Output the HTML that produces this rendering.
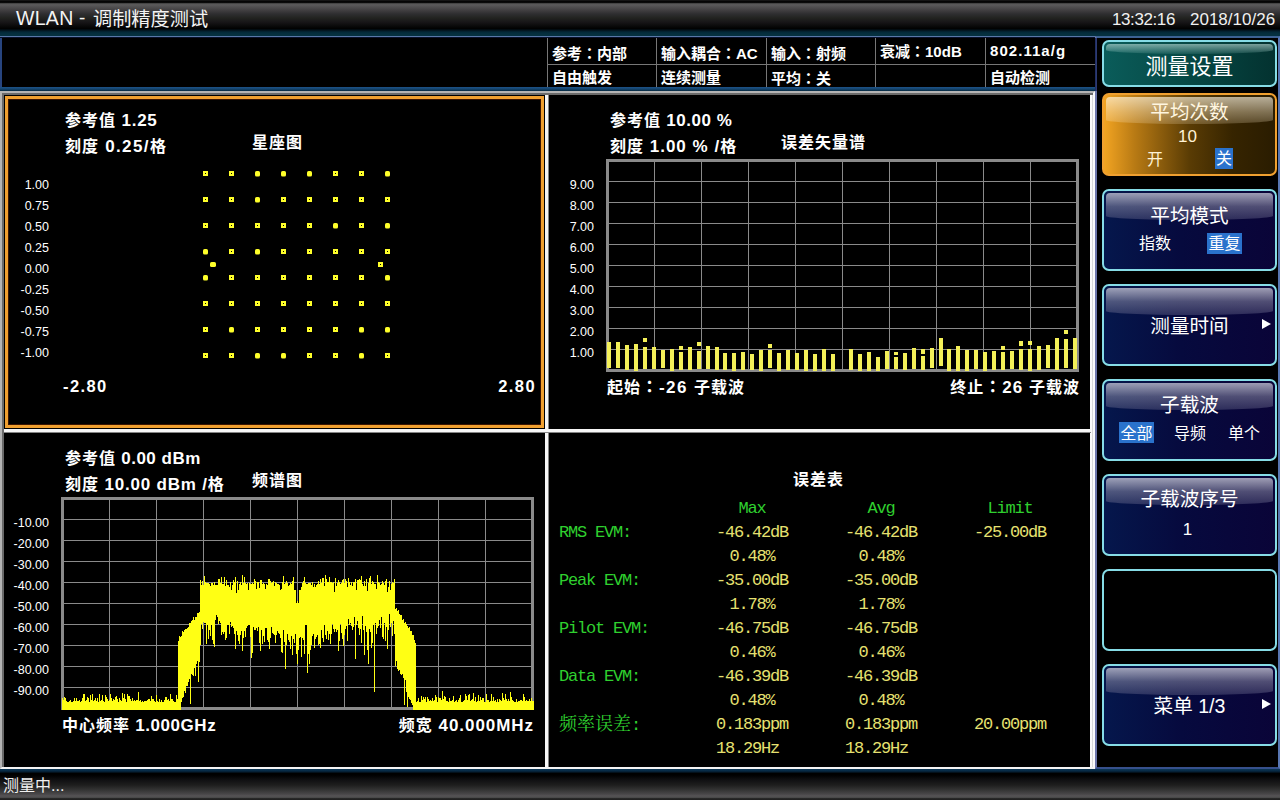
<!DOCTYPE html>
<html lang="zh"><head><meta charset="utf-8"><title>WLAN</title><style>
*{margin:0;padding:0;box-sizing:border-box}
html,body{width:1280px;height:800px;overflow:hidden;background:#000}
body{position:relative;font-family:"Liberation Sans","Noto Sans CJK SC",sans-serif;color:#fff}
.a{position:absolute;white-space:nowrap}
#title{left:0;top:0;width:1280px;height:38px;background:linear-gradient(#181818 0,#121212 1px,#050505 1.4px,#050505 2.4px,#565656 3.8px,#5a595a 5px,#424042 10px,#2e2e30 14px,#222320 18px,#181618 22px,#0a0a0a 26px,#020202 28.5px,#021018 30px,#032838 32px,#05303f 34px,#05303f 35.6px,#5a7aaa 36px,#5676a6 37px,#0a1430 37.4px,#000010 38px)}
#title .t{font-size:19px;line-height:30px;color:#f4f4f4;font-weight:400}
#title .c{top:6px;font-size:17px;line-height:28px;color:#f0f0f0}
#info{left:0;top:38px;width:1095px;height:49px;background:#000;border-left:2px solid #27447f}
#info .v{top:0;width:1px;height:49px;background:#777}
#info .h{left:545px;top:26px;width:548px;height:1px;background:#777}
#info .x{font-size:15px;font-weight:bold;line-height:20px;color:#fff}
#bl{left:0;top:87px;width:1097px;height:4px;background:linear-gradient(#1d5288,#14456f 50%,#072a40)}
#frame{left:0;top:91px;width:1095px;height:678px;background:#000;border:2px solid #b4b4b4;border-right:2px solid #fafafa;border-bottom-color:#f4f4f4;box-shadow:inset 2px 2px 0 #6a6a6a, inset -1px 0 0 #d8d8d8, inset -3px 0 0 #fafafa}
#vdiv{left:545px;top:95px;width:4px;height:672px;background:linear-gradient(90deg,#f6f6f6 0,#f6f6f6 2.6px,#9c9c9c 3px,#6c6c6c 4px)}
#hdiv{left:4px;top:429px;width:1087px;height:4px;background:linear-gradient(#f6f6f6 0,#f6f6f6 2.6px,#9c9c9c 3px,#6c6c6c 4px)}
#sel{left:5px;top:96px;width:539px;height:332px;border:3px solid #f0a030;box-shadow:inset 0 0 0 1px #3a1400}
#side{left:1095px;top:36px;width:185px;height:733px;background:#000;border:2px solid #5876b2;border-bottom:2px solid #36508c;border-top-color:#3c6294;border-left-color:#6c76aa}
.btn{left:1102px;width:175px;border:2px solid #86dce6;border-radius:7px;overflow:hidden}
.btn .g{left:2px;top:2px;right:2px;height:27px;border-radius:4px 4px 50% 50%/4px 4px 4px 4px}
.navy{background:linear-gradient(90deg,#05174c,#060a3e 45%,#0a0438)}
.navy .g{background:linear-gradient(rgba(200,200,215,.78),rgba(150,150,175,.5) 50%,rgba(110,110,145,.36))}
.teal{background:linear-gradient(90deg,#0a5c5a,#064844 50%,#033230)}
.teal .g{height:10px;background:linear-gradient(rgba(200,230,225,.6),rgba(120,180,175,.15))}
.org{background:linear-gradient(90deg,#f2a422,#b87a14 18%,#5a3c04 50%,#362400 75%,#2a1c00);border-color:#f0a030}
.org .g{background:linear-gradient(rgba(255,248,230,.66),rgba(255,240,210,.40) 55%,rgba(255,235,200,.20))}
.bt{left:0;right:0;text-align:center;font-size:19.6px;line-height:26px;color:#fff}
.bs{font-size:16px;line-height:21px;color:#fff;text-align:center}
.hl{background:#2a72cc}
.arr{width:0;height:0;border-left:9px solid #fff;border-top:5px solid transparent;border-bottom:5px solid transparent}
#status{left:0;top:769px;width:1280px;height:31px;background:linear-gradient(#0c3654 0,#0a3250 1px,#062238 2.5px,#000 4.5px,#000 6px,#101012 11px,#1e1e1e 16px,#343434 21px,#484648 25px,#565456 27px,#4a4a4a 28.5px,#242424 29.6px,#202020 31px)}
#status .t{left:3px;top:7px;font-size:16px;line-height:20px;color:#f0f0f0}
.cb{font-weight:700;font-size:16px;letter-spacing:1px;line-height:20px;color:#fff}
.cb span,.lb{font-weight:bold;font-size:17px}
.yl{font-size:12.5px;line-height:14px;color:#fff;text-align:right;width:60px}
.tb{font-family:"Liberation Mono","Noto Serif CJK SC",monospace;font-size:17px;letter-spacing:-1.2px;line-height:20px}
.co{font-family:"Noto Sans CJK JP","Noto Sans CJK TC",sans-serif}
.gr{color:#2fd02f}.ye{color:#e6e070}
</style></head><body>
<div id="title" class="a"><div class="a t" style="left:16px;top:3px;font-size:19.5px;letter-spacing:.3px">WLAN</div><div class="a t" style="left:79px;top:3px">-</div><div class="a t" style="left:93px;top:5px;font-size:19.2px">调制精度测试</div><div class="a c" style="left:1112px;letter-spacing:-.4px">13:32:16</div><div class="a c" style="left:1190px">2018/10/26</div></div>
<div id="info" class="a">
<div class="a v" style="left:545px"></div>
<div class="a v" style="left:654px"></div>
<div class="a v" style="left:764px"></div>
<div class="a v" style="left:873px"></div>
<div class="a v" style="left:983px"></div>
<div class="a h"></div>
<div class="a x" style="left:550px;top:5px">参考<span class="co" lang="ja">：</span>内部</div>
<div class="a x" style="left:550px;top:30px">自由触发</div>
<div class="a x" style="left:659px;top:5px">输入耦合<span class="co" lang="ja">：</span>AC</div>
<div class="a x" style="left:659px;top:30px">连续测量</div>
<div class="a x" style="left:769px;top:5px">输入<span class="co" lang="ja">：</span>射频</div>
<div class="a x" style="left:769px;top:30px">平均<span class="co" lang="ja">：</span>关</div>
<div class="a x" style="left:878px;top:3px">衰减<span class="co" lang="ja">：</span>10dB</div>
<div class="a x" style="left:988px;top:3px;letter-spacing:1.05px">802.11a/g</div>
<div class="a x" style="left:988px;top:30px">自动检测</div>
</div>
<div id="bl" class="a"></div>
<div id="frame" class="a"></div>
<div id="vdiv" class="a"></div><div id="hdiv" class="a"></div>
<div id="sel" class="a"></div>
<div id="side" class="a"></div><div class="a" style="left:1095px;top:38px;width:2px;height:53px;background:linear-gradient(90deg,#1c2a5c,#33407c)"></div>
<div class="a btn teal" style="top:40px;height:47px"><div class="a g"></div><div class="a bt" style="top:12px;font-size:22px">测量设置</div></div>
<div class="a btn org" style="top:93px;height:83px"><div class="a g"></div><div class="a bt" style="top:4px;color:#fff6e0">平均次数</div><div class="a bs" style="left:0;right:4px;top:31px;font-size:17px;color:#fff3d6">10</div><div class="a bs" style="left:43px;top:54px;color:#fff3d6">开</div><div class="a bs hl" style="left:111px;top:53px;width:18px;height:21px">关</div></div>
<div class="a btn navy" style="top:189px;height:82px"><div class="a g"></div><div class="a bt" style="top:12px">平均模式</div><div class="a bs" style="left:35px;top:42px">指数</div><div class="a bs hl" style="left:103px;top:42px;width:35px;height:21px">重复</div></div>
<div class="a btn navy" style="top:284px;height:82px"><div class="a g"></div><div class="a bt" style="top:27px">测量时间</div><div class="a arr" style="left:158px;top:33px"></div></div>
<div class="a btn navy" style="top:379px;height:82px"><div class="a g"></div><div class="a bt" style="top:11px">子载波</div><div class="a bs hl" style="left:15px;top:41px;width:35px;height:21px;line-height:23px">全部</div><div class="a bs" style="left:70px;top:42px">导频</div><div class="a bs" style="left:124px;top:42px">单个</div></div>
<div class="a btn navy" style="top:474px;height:82px"><div class="a g"></div><div class="a bt" style="top:10px">子载波序号</div><div class="a bs" style="left:0;right:4px;top:43px;font-size:17px">1</div></div>
<div class="a btn" style="top:569px;height:82px;background:#000"></div>
<div class="a btn navy" style="top:664px;height:82px"><div class="a g"></div><div class="a bt" style="top:27px">菜单 1/3</div><div class="a arr" style="left:158px;top:33px"></div></div>
<div id="status" class="a"><div class="a t">测量中...</div></div>
<div class="a cb" style="left:65px;top:111px">参考值<span style="letter-spacing:0.75px"> 1.25</span></div>
<div class="a cb" style="left:65px;top:137px">刻度<span style="letter-spacing:1.4px"> 0.25/</span>格</div>
<div class="a cb" style="left:252px;top:133px">星座图</div>
<div class="a yl" style="left:-11px;top:178px">1.00</div>
<div class="a yl" style="left:-11px;top:199px">0.75</div>
<div class="a yl" style="left:-11px;top:220px">0.50</div>
<div class="a yl" style="left:-11px;top:241px">0.25</div>
<div class="a yl" style="left:-11px;top:262px">0.00</div>
<div class="a yl" style="left:-11px;top:283px">-0.25</div>
<div class="a yl" style="left:-11px;top:304px">-0.50</div>
<div class="a yl" style="left:-11px;top:325px">-0.75</div>
<div class="a yl" style="left:-11px;top:346px">-1.00</div>
<div class="a cb lb" style="left:63px;top:376px;font-size:16.5px;letter-spacing:1.4px">-2.80</div>
<div class="a cb lb" style="left:436px;width:100px;text-align:right;top:376px;font-size:16.5px;letter-spacing:1.4px">2.80</div>
<svg class="a" style="left:0;top:0" width="545" height="429" viewBox="0 0 545 429" fill="#ffff2a" fill-rule="evenodd" shape-rendering="crispEdges"><path d="M203 171h5v5h-5zM205 173v1h1v-1z"/><path d="M229 171h5v5h-5zM231 173v1h1v-1z"/><rect x="255" y="171" width="5" height="5.6" rx="1.6" shape-rendering="geometricPrecision"/><rect x="281" y="171" width="5" height="5.6" rx="1.6" shape-rendering="geometricPrecision"/><rect x="307" y="171" width="5" height="5.6" rx="1.6" shape-rendering="geometricPrecision"/><path d="M333 171h5v5h-5zM335 173v1h1v-1z"/><path d="M359 171h5v5h-5zM361 173v1h1v-1z"/><rect x="385" y="171" width="5" height="5.6" rx="1.6" shape-rendering="geometricPrecision"/><path d="M203 197h5v5h-5zM205 199v1h1v-1z"/><path d="M229 197h5v5h-5zM231 199v1h1v-1z"/><rect x="255" y="197" width="5" height="5.6" rx="1.6" shape-rendering="geometricPrecision"/><path d="M281 197h5v5h-5zM283 199v1h1v-1z"/><path d="M307 197h5v5h-5zM309 199v1h1v-1z"/><path d="M333 197h5v5h-5zM335 199v1h1v-1z"/><path d="M359 197h5v5h-5zM361 199v1h1v-1z"/><path d="M385 197h5v5h-5zM387 199v1h1v-1z"/><path d="M203 223h5v5h-5zM205 225v1h1v-1z"/><path d="M229 223h5v5h-5zM231 225v1h1v-1z"/><path d="M255 223h5v5h-5zM257 225v1h1v-1z"/><path d="M281 223h5v5h-5zM283 225v1h1v-1z"/><path d="M307 223h5v5h-5zM309 225v1h1v-1z"/><rect x="333" y="223" width="5" height="5.6" rx="1.6" shape-rendering="geometricPrecision"/><path d="M359 223h5v5h-5zM361 225v1h1v-1z"/><rect x="385" y="223" width="5" height="5.6" rx="1.6" shape-rendering="geometricPrecision"/><rect x="203" y="249" width="5" height="5.6" rx="1.6" shape-rendering="geometricPrecision"/><path d="M229 249h5v5h-5zM231 251v1h1v-1z"/><rect x="255" y="249" width="5" height="5.6" rx="1.6" shape-rendering="geometricPrecision"/><path d="M281 249h5v5h-5zM283 251v1h1v-1z"/><path d="M307 249h5v5h-5zM309 251v1h1v-1z"/><path d="M333 249h5v5h-5zM335 251v1h1v-1z"/><path d="M359 249h5v5h-5zM361 251v1h1v-1z"/><path d="M385 249h5v5h-5zM387 251v1h1v-1z"/><rect x="203" y="275" width="5" height="5.6" rx="1.6" shape-rendering="geometricPrecision"/><path d="M229 275h5v5h-5zM231 277v1h1v-1z"/><path d="M255 275h5v5h-5zM257 277v1h1v-1z"/><path d="M281 275h5v5h-5zM283 277v1h1v-1z"/><path d="M307 275h5v5h-5zM309 277v1h1v-1z"/><path d="M333 275h5v5h-5zM335 277v1h1v-1z"/><path d="M359 275h5v5h-5zM361 277v1h1v-1z"/><rect x="385" y="275" width="5" height="5.6" rx="1.6" shape-rendering="geometricPrecision"/><path d="M203 301h5v5h-5zM205 303v1h1v-1z"/><path d="M229 301h5v5h-5zM231 303v1h1v-1z"/><path d="M255 301h5v5h-5zM257 303v1h1v-1z"/><path d="M281 301h5v5h-5zM283 303v1h1v-1z"/><path d="M307 301h5v5h-5zM309 303v1h1v-1z"/><path d="M333 301h5v5h-5zM335 303v1h1v-1z"/><path d="M359 301h5v5h-5zM361 303v1h1v-1z"/><path d="M385 301h5v5h-5zM387 303v1h1v-1z"/><path d="M203 327h5v5h-5zM205 329v1h1v-1z"/><rect x="229" y="327" width="5" height="5.6" rx="1.6" shape-rendering="geometricPrecision"/><path d="M255 327h5v5h-5zM257 329v1h1v-1z"/><path d="M281 327h5v5h-5zM283 329v1h1v-1z"/><path d="M307 327h5v5h-5zM309 329v1h1v-1z"/><path d="M333 327h5v5h-5zM335 329v1h1v-1z"/><rect x="359" y="327" width="5" height="5.6" rx="1.6" shape-rendering="geometricPrecision"/><rect x="385" y="327" width="5" height="5.6" rx="1.6" shape-rendering="geometricPrecision"/><path d="M203 353h5v5h-5zM205 355v1h1v-1z"/><path d="M229 353h5v5h-5zM231 355v1h1v-1z"/><rect x="255" y="353" width="5" height="5.6" rx="1.6" shape-rendering="geometricPrecision"/><rect x="281" y="353" width="5" height="5.6" rx="1.6" shape-rendering="geometricPrecision"/><path d="M307 353h5v5h-5zM309 355v1h1v-1z"/><path d="M333 353h5v5h-5zM335 355v1h1v-1z"/><rect x="359" y="353" width="5" height="5.6" rx="1.6" shape-rendering="geometricPrecision"/><path d="M385 353h5v5h-5zM387 355v1h1v-1z"/><rect x="210" y="262" width="6" height="5" rx="1.6" shape-rendering="geometricPrecision"/><path d="M378 262h5v5h-5zM380 264v1h1v-1z"/></svg>
<div class="a cb" style="left:610px;top:111px">参考值<span style="letter-spacing:0.55px"> 10.00 %</span></div>
<div class="a cb" style="left:610px;top:137px">刻度<span style="letter-spacing:1.0px"> 1.00 % /</span>格</div>
<div class="a cb" style="left:781px;top:133px">误差矢量谱</div>
<div class="a yl" style="left:534px;top:178px">9.00</div>
<div class="a yl" style="left:534px;top:199px">8.00</div>
<div class="a yl" style="left:534px;top:220px">7.00</div>
<div class="a yl" style="left:534px;top:241px">6.00</div>
<div class="a yl" style="left:534px;top:262px">5.00</div>
<div class="a yl" style="left:534px;top:283px">4.00</div>
<div class="a yl" style="left:534px;top:304px">3.00</div>
<div class="a yl" style="left:534px;top:325px">2.00</div>
<div class="a yl" style="left:534px;top:346px">1.00</div>
<div class="a cb" style="left:607px;top:376px">起始<span class="co" lang="ja">：</span><span style="letter-spacing:1.4px">-26 </span>子载波</div>
<div class="a cb" style="left:880px;width:200px;text-align:right;top:376px">终止<span class="co" lang="ja">：</span><span style="letter-spacing:1.0px">26 </span>子载波</div>
<svg class="a" style="left:0;top:0" width="1095" height="429" viewBox="0 0 1095 429"><path d="M654.5 160.5V370.5" stroke="#8a8a8a" stroke-width="1"/><path d="M607.5 181.5H1077.5" stroke="#8a8a8a" stroke-width="1"/><path d="M701.5 160.5V370.5" stroke="#8a8a8a" stroke-width="1"/><path d="M607.5 202.5H1077.5" stroke="#8a8a8a" stroke-width="1"/><path d="M748.5 160.5V370.5" stroke="#8a8a8a" stroke-width="1"/><path d="M607.5 223.5H1077.5" stroke="#8a8a8a" stroke-width="1"/><path d="M795.5 160.5V370.5" stroke="#8a8a8a" stroke-width="1"/><path d="M607.5 244.5H1077.5" stroke="#8a8a8a" stroke-width="1"/><path d="M842.5 160.5V370.5" stroke="#8a8a8a" stroke-width="1"/><path d="M607.5 265.5H1077.5" stroke="#8a8a8a" stroke-width="1"/><path d="M889.5 160.5V370.5" stroke="#8a8a8a" stroke-width="1"/><path d="M607.5 286.5H1077.5" stroke="#8a8a8a" stroke-width="1"/><path d="M936.5 160.5V370.5" stroke="#8a8a8a" stroke-width="1"/><path d="M607.5 307.5H1077.5" stroke="#8a8a8a" stroke-width="1"/><path d="M983.5 160.5V370.5" stroke="#8a8a8a" stroke-width="1"/><path d="M607.5 328.5H1077.5" stroke="#8a8a8a" stroke-width="1"/><path d="M1030.5 160.5V370.5" stroke="#8a8a8a" stroke-width="1"/><path d="M607.5 349.5H1077.5" stroke="#8a8a8a" stroke-width="1"/><rect x="607.5" y="160.5" width="470" height="210" fill="none" stroke="#8a8a8a" stroke-width="3"/><g fill="#f4f058" shape-rendering="crispEdges"><rect x="607" y="342" width="4" height="26"/><rect x="616" y="342" width="4" height="26"/><rect x="625" y="345" width="4" height="25"/><rect x="634" y="344" width="4" height="27"/><rect x="643" y="347" width="4" height="22"/><rect x="643" y="338" width="4" height="4"/><rect x="652" y="347" width="4" height="22"/><rect x="661" y="350" width="4" height="18"/><rect x="670" y="349" width="4" height="22"/><rect x="679" y="352" width="4" height="18"/><rect x="679" y="346" width="4" height="4"/><rect x="688" y="347" width="4" height="23"/><rect x="697" y="351" width="4" height="18"/><rect x="697" y="342" width="4" height="4"/><rect x="706" y="346" width="4" height="23"/><rect x="715" y="347" width="4" height="23"/><rect x="723" y="353" width="4" height="17"/><rect x="732" y="353" width="4" height="18"/><rect x="741" y="352" width="4" height="18"/><rect x="750" y="354" width="4" height="16"/><rect x="759" y="350" width="4" height="21"/><rect x="768" y="350" width="4" height="18"/><rect x="768" y="344" width="4" height="4"/><rect x="777" y="353" width="4" height="18"/><rect x="786" y="350" width="4" height="20"/><rect x="795" y="353" width="4" height="17"/><rect x="804" y="350" width="4" height="21"/><rect x="813" y="354" width="4" height="17"/><rect x="822" y="349" width="4" height="22"/><rect x="831" y="354" width="4" height="17"/><rect x="849" y="349" width="4" height="21"/><rect x="858" y="354" width="4" height="17"/><rect x="867" y="352" width="4" height="19"/><rect x="876" y="357" width="4" height="14"/><rect x="885" y="351" width="4" height="18"/><rect x="894" y="357" width="4" height="12"/><rect x="894" y="352" width="4" height="3"/><rect x="903" y="353" width="4" height="17"/><rect x="912" y="348" width="4" height="21"/><rect x="921" y="356" width="4" height="14"/><rect x="921" y="349" width="4" height="5"/><rect x="930" y="348" width="4" height="20"/><rect x="939" y="338" width="4" height="28"/><rect x="947" y="349" width="4" height="22"/><rect x="956" y="346" width="4" height="25"/><rect x="965" y="350" width="4" height="21"/><rect x="974" y="350" width="4" height="19"/><rect x="983" y="352" width="4" height="19"/><rect x="992" y="351" width="4" height="19"/><rect x="1001" y="352" width="4" height="18"/><rect x="1001" y="346" width="4" height="4"/><rect x="1010" y="351" width="4" height="18"/><rect x="1019" y="349" width="4" height="21"/><rect x="1019" y="341" width="4" height="5"/><rect x="1028" y="349" width="4" height="22"/><rect x="1028" y="341" width="4" height="4"/><rect x="1037" y="346" width="4" height="24"/><rect x="1046" y="345" width="4" height="23"/><rect x="1055" y="338" width="4" height="32"/><rect x="1064" y="339" width="4" height="29"/><rect x="1064" y="330" width="4" height="4"/><rect x="1073" y="338" width="4" height="31"/></g></svg>
<div class="a cb" style="left:65px;top:449px">参考值<span style="letter-spacing:0.5px"> 0.00 dBm</span></div>
<div class="a cb" style="left:65px;top:475px">刻度<span style="letter-spacing:0.8px"> 10.00 dBm /</span>格</div>
<div class="a cb" style="left:252px;top:471px">频谱图</div>
<div class="a yl" style="left:-11px;top:516px">-10.00</div>
<div class="a yl" style="left:-11px;top:537px">-20.00</div>
<div class="a yl" style="left:-11px;top:558px">-30.00</div>
<div class="a yl" style="left:-11px;top:579px">-40.00</div>
<div class="a yl" style="left:-11px;top:600px">-50.00</div>
<div class="a yl" style="left:-11px;top:621px">-60.00</div>
<div class="a yl" style="left:-11px;top:642px">-70.00</div>
<div class="a yl" style="left:-11px;top:663px">-80.00</div>
<div class="a yl" style="left:-11px;top:684px">-90.00</div>
<div class="a cb" style="left:62px;top:716px">中心频率<span style="letter-spacing:0.55px"> 1.000GHz</span></div>
<div class="a cb" style="left:334px;width:200px;text-align:right;top:716px">频宽<span style="letter-spacing:0.95px"> 40.000MHz</span></div>
<svg class="a" style="left:0;top:432px" width="545" height="337" viewBox="0 432 545 337"><path d="M109.5 498.5V708.5" stroke="#8a8a8a" stroke-width="1"/><path d="M62.5 519.5H532.5" stroke="#8a8a8a" stroke-width="1"/><path d="M156.5 498.5V708.5" stroke="#8a8a8a" stroke-width="1"/><path d="M62.5 540.5H532.5" stroke="#8a8a8a" stroke-width="1"/><path d="M203.5 498.5V708.5" stroke="#8a8a8a" stroke-width="1"/><path d="M62.5 561.5H532.5" stroke="#8a8a8a" stroke-width="1"/><path d="M250.5 498.5V708.5" stroke="#8a8a8a" stroke-width="1"/><path d="M62.5 582.5H532.5" stroke="#8a8a8a" stroke-width="1"/><path d="M297.5 498.5V708.5" stroke="#8a8a8a" stroke-width="1"/><path d="M62.5 603.5H532.5" stroke="#8a8a8a" stroke-width="1"/><path d="M344.5 498.5V708.5" stroke="#8a8a8a" stroke-width="1"/><path d="M62.5 624.5H532.5" stroke="#8a8a8a" stroke-width="1"/><path d="M391.5 498.5V708.5" stroke="#8a8a8a" stroke-width="1"/><path d="M62.5 645.5H532.5" stroke="#8a8a8a" stroke-width="1"/><path d="M438.5 498.5V708.5" stroke="#8a8a8a" stroke-width="1"/><path d="M62.5 666.5H532.5" stroke="#8a8a8a" stroke-width="1"/><path d="M485.5 498.5V708.5" stroke="#8a8a8a" stroke-width="1"/><path d="M62.5 687.5H532.5" stroke="#8a8a8a" stroke-width="1"/><rect x="62.5" y="498.5" width="470" height="210" fill="none" stroke="#8a8a8a" stroke-width="3"/><path d="M62.5 698V710M63.5 700V710M64.5 697V710M65.5 698V710M66.5 701V710M67.5 702V710M68.5 702V710M69.5 701V710M70.5 700V710M71.5 702V710M72.5 702V710M73.5 701V710M74.5 698V710M75.5 701V710M76.5 698V710M77.5 701V710M78.5 701V710M79.5 700V710M80.5 702V710M81.5 701V710M82.5 698V710M83.5 694V710M84.5 694V710M85.5 701V710M86.5 700V710M87.5 697V710M88.5 698V710M89.5 702V710M90.5 695V710M91.5 700V710M92.5 694V710M93.5 701V710M94.5 700V710M95.5 698V710M96.5 701V710M97.5 698V710M98.5 702V710M99.5 694V710M100.5 701V710M101.5 700V710M102.5 695V710M103.5 701V710M104.5 702V710M105.5 695V710M106.5 697V710M107.5 699V710M108.5 701V710M109.5 700V710M110.5 694V710M111.5 698V710M112.5 701V710M113.5 699V710M114.5 700V710M115.5 697V710M116.5 696V710M117.5 699V710M118.5 702V710M119.5 698V710M120.5 700V710M121.5 701V710M122.5 693V710M123.5 698V710M124.5 694V710M125.5 699V710M126.5 702V710M127.5 694V710M128.5 696V710M129.5 696V710M130.5 699V710M131.5 701V710M132.5 698V710M133.5 701V710M134.5 700V710M135.5 701V710M136.5 700V710M137.5 700V710M138.5 692V710M139.5 701V710M140.5 700V710M141.5 702V710M142.5 701V710M143.5 702V710M144.5 701V710M145.5 701V710M146.5 701V710M147.5 700V710M148.5 699V710M149.5 699V710M150.5 701V710M151.5 696V710M152.5 699V710M153.5 699V710M154.5 701V710M155.5 702V710M156.5 695V710M157.5 701V710M158.5 702V710M159.5 699V710M160.5 702V710M161.5 700V710M162.5 702V710M163.5 702V710M164.5 700V710M165.5 697V710M166.5 697V710M167.5 700V710M168.5 699V710M169.5 701V710M170.5 694V710M171.5 699V710M172.5 699V710M173.5 701V710M174.5 702V710M175.5 702V710M176.5 695V710M177.5 699V710M178.5 641V710M179.5 636V710M180.5 637V710M181.5 636V702M182.5 631V698M183.5 632V697M184.5 630V691M185.5 629V693M186.5 629V686M187.5 628V686M188.5 627V682M189.5 623V679M190.5 623V704M191.5 621V674M192.5 620V675M193.5 617V676M194.5 620V668M195.5 617V676M196.5 617V664M197.5 613V661M198.5 613V682M199.5 612V662M200.5 580V645M201.5 585V624M202.5 581V629M203.5 585V622M204.5 576V623M205.5 582V623M206.5 583V644M207.5 583V625M208.5 583V639M209.5 584V630M210.5 586V636M211.5 583V625M212.5 583V640M213.5 585V644M214.5 582V647M215.5 585V620M216.5 585V615M217.5 585V617M218.5 579V624M219.5 579V621M220.5 583V623M221.5 577V635M222.5 584V632M223.5 584V634M224.5 577V632M225.5 586V640M226.5 580V638M227.5 585V625M228.5 585V625M229.5 587V634M230.5 582V622M231.5 590V627M232.5 585V626M233.5 580V628M234.5 582V634M235.5 577V649M236.5 593V631M237.5 581V635M238.5 590V641M239.5 584V644M240.5 582V635M241.5 585V631M242.5 575V651M243.5 583V638M244.5 577V631M245.5 583V637M246.5 584V628M247.5 583V626M248.5 590V625M249.5 583V625M250.5 584V637M251.5 584V658M252.5 583V653M253.5 584V627M254.5 579V630M255.5 581V630M256.5 589V628M257.5 582V631M258.5 582V627M259.5 588V643M260.5 580V651M261.5 580V630M262.5 584V644M263.5 583V636M264.5 584V642M265.5 589V628M266.5 584V628M267.5 585V640M268.5 579V642M269.5 579V649M270.5 581V638M271.5 583V627M272.5 582V633M273.5 581V634M274.5 586V635M275.5 582V643M276.5 583V635M277.5 584V631M278.5 584V633M279.5 585V634M280.5 590V638M281.5 589V652M282.5 582V653M283.5 576V630M284.5 584V642M285.5 583V669M286.5 581V645M287.5 583V634M288.5 586V640M289.5 585V642M290.5 583V649M291.5 584V636M292.5 581V655M293.5 577V639M294.5 590V643M295.5 590V634M296.5 603V654M297.5 601V664M298.5 603V650M299.5 590V638M300.5 590V637M301.5 587V657M302.5 583V638M303.5 581V640M304.5 577V654M305.5 583V625M306.5 584V625M307.5 584V673M308.5 583V654M309.5 583V664M310.5 583V650M311.5 585V645M312.5 582V636M313.5 587V634M314.5 584V648M315.5 587V639M316.5 585V637M317.5 584V635M318.5 581V645M319.5 584V644M320.5 579V648M321.5 583V630M322.5 578V638M323.5 578V642M324.5 586V625M325.5 575V635M326.5 579V639M327.5 582V631M328.5 582V640M329.5 577V634M330.5 582V644M331.5 582V634M332.5 583V624M333.5 582V629M334.5 592V632M335.5 578V629M336.5 586V632M337.5 583V630M338.5 580V651M339.5 582V641M340.5 584V624M341.5 583V633M342.5 580V639M343.5 579V646M344.5 583V635M345.5 579V629M346.5 581V626M347.5 587V641M348.5 578V619M349.5 582V625M350.5 585V623M351.5 582V626M352.5 586V630M353.5 582V627M354.5 582V617M355.5 579V659M356.5 590V625M357.5 580V621M358.5 580V628M359.5 579V635M360.5 580V629M361.5 576V643M362.5 584V616M363.5 586V630M364.5 581V655M365.5 586V626M366.5 579V632M367.5 591V650M368.5 583V664M369.5 578V629M370.5 576V632M371.5 584V648M372.5 581V643M373.5 582V625M374.5 584V692M375.5 584V623M376.5 589V634M377.5 575V628M378.5 582V626M379.5 583V620M380.5 585V628M381.5 584V617M382.5 581V637M383.5 583V639M384.5 585V623M385.5 581V641M386.5 579V627M387.5 592V649M388.5 587V630M389.5 581V614M390.5 590V627M391.5 584V623M392.5 582V636M393.5 583V621M394.5 579V634M395.5 609V666M396.5 608V661M397.5 611V669M398.5 610V671M399.5 614V670M400.5 615V674M401.5 615V675M402.5 620V674M403.5 619V678M404.5 623V705M405.5 622V680M406.5 624V692M407.5 626V707M408.5 628V697M409.5 627V699M410.5 631V700M411.5 631V703M412.5 635V705M413.5 635V710M414.5 640V710M415.5 643V710M416.5 702V710M417.5 701V710M418.5 698V710M419.5 702V710M420.5 702V710M421.5 696V710M422.5 700V710M423.5 697V710M424.5 699V710M425.5 697V710M426.5 702V710M427.5 697V710M428.5 699V710M429.5 701V710M430.5 700V710M431.5 701V710M432.5 698V710M433.5 701V710M434.5 700V710M435.5 695V710M436.5 697V710M437.5 702V710M438.5 697V710M439.5 698V710M440.5 698V710M441.5 700V710M442.5 691V710M443.5 699V710M444.5 696V710M445.5 697V710M446.5 701V710M447.5 701V710M448.5 702V710M449.5 698V710M450.5 701V710M451.5 701V710M452.5 700V710M453.5 696V710M454.5 702V710M455.5 701V710M456.5 700V710M457.5 702V710M458.5 700V710M459.5 698V710M460.5 695V710M461.5 702V710M462.5 702V710M463.5 701V710M464.5 700V710M465.5 694V710M466.5 696V710M467.5 700V710M468.5 695V710M469.5 694V710M470.5 701V710M471.5 700V710M472.5 699V710M473.5 693V710M474.5 701V710M475.5 697V710M476.5 702V710M477.5 701V710M478.5 695V710M479.5 701V710M480.5 697V710M481.5 700V710M482.5 698V710M483.5 698V710M484.5 702V710M485.5 702V710M486.5 694V710M487.5 700V710M488.5 700V710M489.5 702V710M490.5 701V710M491.5 694V710M492.5 701V710M493.5 697V710M494.5 701V710M495.5 700V710M496.5 702V710M497.5 699V710M498.5 702V710M499.5 699V710M500.5 700V710M501.5 701V710M502.5 693V710M503.5 698V710M504.5 700V710M505.5 694V710M506.5 699V710M507.5 701V710M508.5 699V710M509.5 701V710M510.5 692V710M511.5 697V710M512.5 700V710M513.5 701V710M514.5 702V710M515.5 702V710M516.5 699V710M517.5 702V710M518.5 701V710M519.5 701V710M520.5 700V710M521.5 700V710M522.5 701V710M523.5 694V710M524.5 697V710M525.5 701V710M526.5 700V710M527.5 701V710M528.5 701V710M529.5 699V710M530.5 701V710M531.5 698V710M532.5 701V710M533.5 701V710" stroke="#ffff14" stroke-width="1" shape-rendering="crispEdges"/></svg>
<div class="a cb" style="left:793px;top:470px">误差表</div>
<div class="a tb gr" style="left:692px;width:120px;text-align:center;top:499px">Max</div>
<div class="a tb gr" style="left:821px;width:120px;text-align:center;top:499px">Avg</div>
<div class="a tb gr" style="left:950px;width:120px;text-align:center;top:499px">Limit</div>
<div class="a tb gr" style="left:559px;top:523px">RMS EVM:</div>
<div class="a tb ye" style="left:692px;width:120px;text-align:center;top:523px">-46.42dB</div>
<div class="a tb ye" style="left:821px;width:120px;text-align:center;top:523px">-46.42dB</div>
<div class="a tb ye" style="left:950px;width:120px;text-align:center;top:523px">-25.00dB</div>
<div class="a tb ye" style="left:692px;width:120px;text-align:center;top:547px">0.48%</div>
<div class="a tb ye" style="left:821px;width:120px;text-align:center;top:547px">0.48%</div>
<div class="a tb gr" style="left:559px;top:571px">Peak EVM:</div>
<div class="a tb ye" style="left:692px;width:120px;text-align:center;top:571px">-35.00dB</div>
<div class="a tb ye" style="left:821px;width:120px;text-align:center;top:571px">-35.00dB</div>
<div class="a tb ye" style="left:692px;width:120px;text-align:center;top:595px">1.78%</div>
<div class="a tb ye" style="left:821px;width:120px;text-align:center;top:595px">1.78%</div>
<div class="a tb gr" style="left:559px;top:619px">Pilot EVM:</div>
<div class="a tb ye" style="left:692px;width:120px;text-align:center;top:619px">-46.75dB</div>
<div class="a tb ye" style="left:821px;width:120px;text-align:center;top:619px">-46.75dB</div>
<div class="a tb ye" style="left:692px;width:120px;text-align:center;top:643px">0.46%</div>
<div class="a tb ye" style="left:821px;width:120px;text-align:center;top:643px">0.46%</div>
<div class="a tb gr" style="left:559px;top:667px">Data EVM:</div>
<div class="a tb ye" style="left:692px;width:120px;text-align:center;top:667px">-46.39dB</div>
<div class="a tb ye" style="left:821px;width:120px;text-align:center;top:667px">-46.39dB</div>
<div class="a tb ye" style="left:692px;width:120px;text-align:center;top:691px">0.48%</div>
<div class="a tb ye" style="left:821px;width:120px;text-align:center;top:691px">0.48%</div>
<div class="a tb gr" style="left:559px;top:715px"><span style="font-size:18px;letter-spacing:0">频率误差</span>:</div>
<div class="a tb ye" style="left:692px;width:120px;text-align:center;top:715px">0.183ppm</div>
<div class="a tb ye" style="left:821px;width:120px;text-align:center;top:715px">0.183ppm</div>
<div class="a tb ye" style="left:950px;width:120px;text-align:center;top:715px">20.00ppm</div>
<div class="a tb ye" style="left:692px;width:120px;text-align:center;top:739px">18.29Hz&nbsp;</div>
<div class="a tb ye" style="left:821px;width:120px;text-align:center;top:739px">18.29Hz&nbsp;</div>
</body></html>
